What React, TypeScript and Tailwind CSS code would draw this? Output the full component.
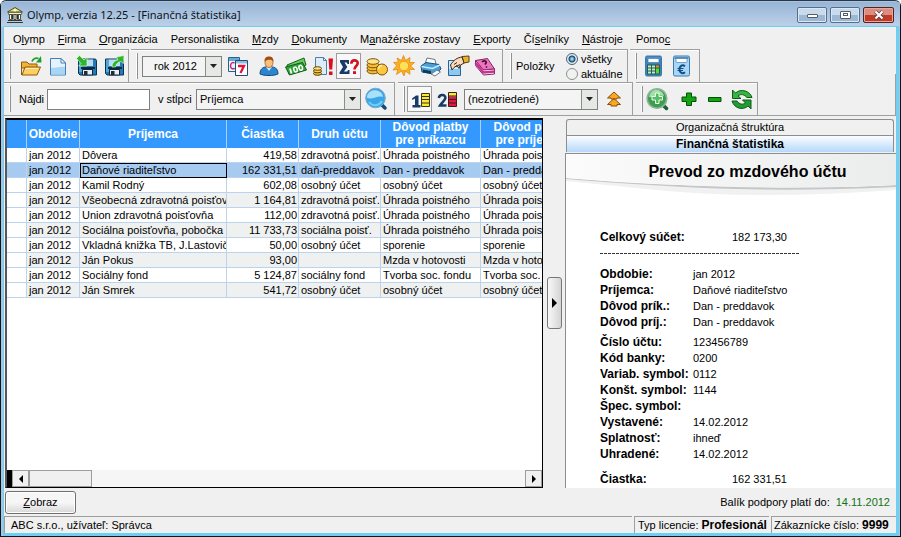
import type { ReactNode } from "react";
import clsx from "clsx";

type Payment = {
  period: string;
  payee: string;
  amount: string;
  account: string;
  reason: string;
};

const MENU = [
  ["O", "l", "ymp"],
  ["", "F", "irma"],
  ["", "O", "rganizácia"],
  ["Personalistika", "", ""],
  ["", "M", "zdy"],
  ["", "D", "okumenty"],
  ["M", "a", "nažérske zostavy"],
  ["", "E", "xporty"],
  ["Čí", "s", "elníky"],
  ["", "N", "ástroje"],
  ["Pomo", "c", ""],
];

const PAYMENTS: Payment[] = [
  { period: "jan 2012", payee: "Dôvera", amount: "419,58", account: "zdravotná poisť.", reason: "Úhrada poistného" },
  { period: "jan 2012", payee: "Daňové riaditeľstvo", amount: "162 331,51", account: "daň-preddavok", reason: "Dan - preddavok" },
  { period: "jan 2012", payee: "Kamil Rodný", amount: "602,08", account: "osobný účet", reason: "osobný účet" },
  { period: "jan 2012", payee: "Všeobecná zdravotná poisťov", amount: "1 164,81", account: "zdravotná poisť.", reason: "Úhrada poistného" },
  { period: "jan 2012", payee: "Union zdravotná poisťovňa", amount: "112,00", account: "zdravotná poisť.", reason: "Úhrada poistného" },
  { period: "jan 2012", payee: "Sociálna poisťovňa, pobočka", amount: "11 733,73", account: "sociálna poisť.", reason: "Úhrada poistného" },
  { period: "jan 2012", payee: "Vkladná knižka TB, J.Lastovič", amount: "50,00", account: "osobný účet", reason: "sporenie" },
  { period: "jan 2012", payee: "Ján Pokus", amount: "93,00", account: "", reason: "Mzda v hotovosti" },
  { period: "jan 2012", payee: "Sociálny fond", amount: "5 124,87", account: "sociálny fond", reason: "Tvorba soc. fondu" },
  { period: "jan 2012", payee: "Ján Smrek", amount: "541,72", account: "osobný účet", reason: "osobný účet" },
];

const DETAIL_GROUPS = [
  [
    ["Obdobie:", "jan 2012"],
    ["Príjemca:", "Daňové riaditeľstvo"],
    ["Dôvod prík.:", "Dan - preddavok"],
    ["Dôvod príj.:", "Dan - preddavok"],
  ],
  [
    ["Číslo účtu:", "123456789"],
    ["Kód banky:", "0200"],
    ["Variab. symbol:", "0112"],
    ["Konšt. symbol:", "1144"],
    ["Špec. symbol:", ""],
    ["Vystavené:", "14.02.2012"],
    ["Splatnosť:", "ihneď"],
    ["Uhradené:", "14.02.2012"],
  ],
];

function Icon({ children }: { children: ReactNode }) {
  return (
    <svg viewBox="0 0 24 24" className="h-6 w-6 shrink-0" aria-hidden="true">
      {children}
    </svg>
  );
}

function ToolButton({ label, active, children }: { label: string; active?: boolean; children: ReactNode }) {
  return (
    <button
      type="button"
      aria-label={label}
      className={clsx(
        "flex h-[26px] shrink-0 items-center justify-center border",
        active ? "mr-[2px] w-[25px] border-[#9c9c9c] bg-[#f8f8fa]" : "w-[27px] border-transparent",
      )}
    >
      <Icon>{children}</Icon>
    </button>
  );
}

function ToolGroup({ className, children }: { className?: string; children?: ReactNode }) {
  return (
    <div
      className={clsx(
        "flex items-center border-t border-r border-[#9d9f9d] pl-[5px] shadow-[inset_0_1px_0_#ffffff]",
        className,
      )}
    >
      <span className="h-[26px] w-[2px] shrink-0 border-r border-[#8f918f] bg-white" />
      {children}
    </div>
  );
}

function Combo({ label, value, className, center }: { label: string; value: string; className: string; center?: boolean }) {
  return (
    <div className={clsx("relative h-[21px] shrink-0 border border-[#7f817f] bg-[#f3f4f3]", className)}>
      <select
        aria-label={label}
        className={clsx("block h-full w-full appearance-none bg-transparent pr-4 pl-[3px] outline-none", center && "text-center")}
      >
        <option>{value}</option>
      </select>
      <span className="pointer-events-none absolute inset-y-0 right-0 flex w-4 items-center justify-center border-l border-[#8c8e8c] bg-[#e6e8e6]">
        <svg viewBox="0 0 7 4" className="h-1 w-[7px]">
          <path d="M0 0h7L3.500 4z" fill="#222" />
        </svg>
      </span>
    </div>
  );
}

function Disk({ out }: { out?: boolean }) {
  return (
    <>
      <path d="M3.500 5h17l1 1.500V21H5l-1.500-1.500z" fill="#2579b5" stroke="#0d3350" />
      <path d="M4 5.500h3V18H4z" fill="#4fa6dc" />
      <path d="M7 5.500h11v6.500H7z" fill="#b9dcf2" />
      <path d="M6 13h14v2H6z" fill="#10283b" />
      <path d="M7.500 15.500h10V21h-10z" fill="#e8eef2" stroke="#10283b" />
      <path d="M9 17h3.500v4H9z" fill="#1b2c3a" />
      {out ? (
        <path d="M10 13c0-4 2.500-6.500 6-7L14.500 3 22 1.500 21.500 9.500 19 7.500c-3 .5-5 2.500-5.500 5.500z" fill="#2fb52c" stroke="#e9ffe6" strokeWidth=".6" />
      ) : (
        <path d="M1.500 4.500 4.500 1.500l4.500 4.500L12 3v9H3.500L6 9.500z" fill="#2fb52c" stroke="#e9ffe6" strokeWidth=".6" />
      )}
    </>
  );
}

function Calculator({ euro }: { euro?: boolean }) {
  return (
    <>
      <rect x="3.500" y="2" width="16" height="20" rx="1.500" fill={euro ? "#a8d6f6" : "#3f83bb"} stroke="#3c79ab" />
      <path d="M4.500 3h14v2h-14z" fill="#4b8fc8" />
      <rect x="6" y="4.500" width="11" height="4" rx="1" fill="#fff" stroke="#356f9f" strokeWidth=".6" />
      {euro ? (
        <>
          <path d="M15 12.300c-3-2.300-5.500 0-5.500 3s2.500 5.300 5.500 3" fill="none" stroke="#114d87" strokeWidth="2" />
          <path d="M7.500 14.500h6M7.500 16.500h5.500" stroke="#114d87" />
        </>
      ) : (
        <>
          <path d="M5 10.500h13v10H5z" fill="#1f5d55" />
          <path d="M6 11.500h3v2H6zM10 11.500h3v2h-3zM6 14.500h3v2H6zM10 14.500h3v2h-3zM6 17.500h3v2H6zM10 17.500h3v2h-3z" fill="#c7ecb9" />
          <path d="M14 11.500h3v2h-3z" fill="#f08b3a" />
          <path d="M14 14.500h3v5h-3z" fill="#4ddb3a" />
        </>
      )}
    </>
  );
}

function TitleBar() {
  return (
    <header className="flex h-[25px] shrink-0 items-center bg-linear-to-b from-[#98b5d6] to-[#bdd2e9] pr-[6px] pl-[5px]">
      <svg viewBox="0 0 18 18" className="h-[18px] w-[18px] shrink-0" aria-hidden="true">
        <path d="M9 1.500 16.500 6h-15z" fill="#e8e57a" stroke="#4d4b24" />
        <circle cx="9" cy="4.300" r="1.300" fill="#fffbd0" />
        <path d="M2.500 6.500h13v2h-13z" fill="#f6f3bf" stroke="#3c3a25" strokeWidth=".6" />
        <path d="M3.500 8.500h2v5h-2zM8 8.500h2v5H8zM12.500 8.500h2v5h-2z" fill="#fffde0" stroke="#2e2d20" strokeWidth=".8" />
        <path d="M6.500 8.500v5M11.500 8.500v5" stroke="#2e2d20" />
        <path d="M2 14h14v1H2zM1 16h16v1H1z" fill="#3a382a" />
      </svg>
      <h1 className="ml-[3px] flex-1 truncate pt-px font-['Noto_Sans','Liberation_Sans',sans-serif] text-[11px] text-[#0c1420]">
        Olymp, verzia 12.25 - [Finančná štatistika]
      </h1>
      <div className="flex gap-[3px]">
        <button type="button" aria-label="Minimalizovať" className="flex h-4 w-[30px] items-center justify-center rounded-[2px] border border-[#55708f] bg-linear-to-b from-[#c9daec] from-50% to-[#9db8d5] to-50% shadow-[inset_0_0_0_1px_#dbe7f3]">
          <span className="mt-[3px] h-1 w-[11px] rounded-[1px] border border-[#535d68] bg-white" />
        </button>
        <button type="button" aria-label="Maximalizovať" className="flex h-4 w-[30px] items-center justify-center rounded-[2px] border border-[#55708f] bg-linear-to-b from-[#c9daec] from-50% to-[#9db8d5] to-50% shadow-[inset_0_0_0_1px_#dbe7f3]">
          <span className="flex h-2 w-[11px] items-center justify-center rounded-[1px] border border-[#535d68] bg-white">
            <span className="h-[3px] w-[5px] border border-[#535d68]" />
          </span>
        </button>
        <button type="button" aria-label="Zavrieť" className="flex h-4 w-[31px] items-center justify-center rounded-[2px] border border-[#5d1f1a] bg-linear-to-b from-[#dc8d80] from-50% to-[#c03a26] to-50% shadow-[inset_0_0_0_1px_#e6a79c]">
          <svg viewBox="0 0 12 10" className="h-[10px] w-3" aria-hidden="true">
            <path d="m2.500 1.500 7 7m0-7-7 7" stroke="#4b3f45" strokeWidth="3.600" />
            <path d="m2.500 1.500 7 7m0-7-7 7" stroke="#fff" strokeWidth="2.200" />
          </svg>
        </button>
      </div>
    </header>
  );
}

function MainToolbar() {
  return (
    <div className="flex h-[33px] shrink-0 gap-[2px]">
      <ToolGroup className="w-[125px]">
        <div className="ml-[6px] flex">
          <ToolButton label="Otvoriť">
            <path d="M2.500 8h5.500l2 2h8v4H2.500z" fill="#f2b23a" stroke="#8d5a0c" />
            <path d="M2.500 21V8" stroke="#8d5a0c" />
            <path d="M6 13h15.500L18 21H3z" fill="#fdcf62" stroke="#8d5a0c" />
            <path d="M7 14.500h12" stroke="#fff1b8" />
            <path d="M13 7.500c1-3 4-4 6.500-3" fill="none" stroke="#1f9c2b" strokeWidth="1.800" />
            <path d="m22 2 .5 6.500H17z" fill="#1f9c2b" />
          </ToolButton>
          <ToolButton label="Nový">
            <path d="M4.500 4.500H15l4.500 4.500v12h-15z" fill="#e3f2fc" stroke="#3f7fb8" />
            <path d="M5 14c5 0 9-2 14-1v7.500H5z" fill="#a9d5f5" />
            <path d="M15 4.500V9h4.500z" fill="#fff" stroke="#3f7fb8" />
          </ToolButton>
          <span className="w-[2px]" />
          <ToolButton label="Načítať"><Disk /></ToolButton>
          <ToolButton label="Uložiť"><Disk out /></ToolButton>
        </div>
      </ToolGroup>
      <ToolGroup className="w-[372px]">
        <Combo label="Rok" value="rok 2012" className="ml-1 w-20" center />
        <div className="ml-[2px] flex">
          <ToolButton label="Kalendár">
            <path d="M2.500 3.500h11v14h-11z" fill="#e9f3fc" stroke="#26618f" />
            <path d="M3 4h10v3H3z" fill="#6ba7d6" />
            <path d="M8.500 9c-2-1-4 0-4 3s3 3.500 4 2" fill="none" stroke="#c42c75" strokeWidth="1.500" />
            <path d="M9.500 6.500h12v15h-12z" fill="#fff" stroke="#1d4e79" />
            <path d="M10 7h11v2.500H10z" fill="#8dbce2" />
            <path d="M12 12h6l-3.500 7" fill="none" stroke="#e0143a" strokeWidth="2.300" />
          </ToolButton>
          <span className="w-1" />
          <ToolButton label="Zamestnanci">
            <path d="M3 20c0-5 3-7 6-7h6c4 0 6 3 6 7-4 2-14 2-18 0z" fill="#2c86cf" stroke="#164a7c" />
            <path d="M9 13h6l-3 4z" fill="#cfe9fb" />
            <ellipse cx="12" cy="8.500" rx="4" ry="5" fill="#f8c07b" stroke="#a55c18" strokeWidth=".8" />
            <path d="M7.500 7.500c0-4 2-5 4.500-5s4.500 1 4.500 5c-2-2.500-6-2.500-9 0z" fill="#a34b12" />
          </ToolButton>
          <ToolButton label="Mzdy">
            <path d="m3 11 17-7 2 7L5 20z" fill="#6cc95f" stroke="#18641a" />
            <path d="m1.500 13 17-4.500 4 7.500-17 5z" fill="#2fa336" stroke="#11581a" />
            <path d="m6 14.500 1.500 5" stroke="#fff" strokeWidth="1.800" />
            <ellipse cx="11.500" cy="15.500" rx="1.700" ry="2.500" transform="rotate(-17 11.500 15.500)" fill="none" stroke="#fff" strokeWidth="1.500" />
            <ellipse cx="16.700" cy="13.800" rx="1.700" ry="2.500" transform="rotate(-17 16.700 13.800)" fill="none" stroke="#fff" strokeWidth="1.500" />
          </ToolButton>
          <ToolButton label="Neuhradené doklady">
            <path d="M4.500 3.500h8l3 3v14h-11z" fill="#dcecf8" stroke="#4d7fa8" />
            <path d="M12.500 3.500v3h3z" fill="#fff" stroke="#4d7fa8" />
            <ellipse cx="6.500" cy="19.500" rx="4" ry="1.800" fill="#f2bb2c" stroke="#5f4206" />
            <ellipse cx="6.500" cy="17" rx="4" ry="1.800" fill="#f8ce4a" stroke="#5f4206" />
            <ellipse cx="6.500" cy="14.500" rx="4" ry="1.800" fill="#fde27c" stroke="#5f4206" />
            <path d="M17.500 4.500H22l-.8 11h-2.900zM18 17.500h3.500V21H18z" fill="#d90f1d" />
          </ToolButton>
          <ToolButton label="Finančná štatistika" active>
            <path d="M3 6h9v4h-1.500l-.7-1.500H7.500l2.800 4.500-3.300 4.500h3.200l.8-1.500h1.500v4H2.500v-1.500L6 13 3 8z" fill="#173a68" />
            <path d="M14.300 9.800c0-4.500 6.400-4.300 6.400-.8 0 3-3.200 3-3.200 6.500" fill="none" stroke="#d5101f" strokeWidth="2.600" />
            <path d="M16 17.200h3V20h-3z" fill="#d5101f" />
          </ToolButton>
          <ToolButton label="Zrážky">
            <g fill="#f5bd35" stroke="#7d5308">
              <ellipse cx="8" cy="17" rx="6" ry="2.800" />
              <ellipse cx="8" cy="14" rx="6" ry="2.800" />
              <ellipse cx="8" cy="11" rx="6" ry="2.800" />
              <ellipse cx="8" cy="7.500" rx="6" ry="2.800" fill="#fde588" />
              <circle cx="17" cy="15.500" r="5.500" fill="#fbc73c" />
            </g>
            <path d="M13.500 15c.3-2.500 1.500-3.500 3.500-3.500" fill="none" stroke="#fff0a8" strokeWidth="1.500" />
          </ToolButton>
          <ToolButton label="Dovolenky">
            <path d="m11.500 1.500 2 5L18 3.500l-.5 5 5 0-4 3.500 4 3.500-5-.2.500 5-4.500-3.300-1.500 5-2.500-5-5 3.500 1.500-5-5 .5 3.800-4.500-3.300-3 5-.3L5 4l4.500 2.500z" fill="#fbb126" stroke="#e38609" strokeWidth=".8" />
            <circle cx="12" cy="12" r="4.800" fill="#ffe05b" stroke="#f09a17" />
          </ToolButton>
          <ToolButton label="Tlač">
            <path d="m6 10 2-6 8 1.500 1 5z" fill="#fff" stroke="#66788a" />
            <path d="m2 12 5-3.500 13 2 2 4.500-6 5-13-2z" fill="#4a9fd6" stroke="#174f7c" />
            <path d="m2.500 12.500 11 2L21 11" fill="none" stroke="#c9eafd" strokeWidth="1.500" />
            <path d="m4 15.500 8 1.500v3l-8-1.500z" fill="#12395b" />
            <path d="m12 20 6-4 3.500 2-5.500 4z" fill="#f6fafc" stroke="#66788a" />
          </ToolButton>
          <ToolButton label="Podpis">
            <path d="M2.500 6.500h12v15h-12z" fill="#cfe9fb" stroke="#286595" />
            <path d="M3 15h11v6H3z" fill="#8cc9f2" />
            <path d="m16 2.500 7-.5v6l-5 1z" fill="#e7b22e" stroke="#5d420a" />
            <path d="M4.500 11c3-5 7-7.500 11.500-8l2 6-4 2.500-1 3-2-3-3 2-2 2.500z" fill="#fbd9bd" stroke="#3f2a1c" />
            <path d="m8 10.500 3-2m-1 4 4-2" stroke="#3f2a1c" />
          </ToolButton>
          <ToolButton label="Príručka">
            <path d="m2.500 6.500 12-2L21.500 15l-11 1z" fill="#ec76bd" stroke="#8e2167" />
            <path d="m2.500 6.500 8 9.500 11-1v5l-11 1-8-9.500z" fill="#fff" stroke="#8e2167" />
            <path d="m2.500 9 8 9.500 11-1" fill="none" stroke="#c43292" strokeWidth="2.500" />
            <path d="M9 8c2-2.500 5-.5 4 1l-1 1.500m1 2 1 1" fill="none" stroke="#401031" strokeWidth="1.700" />
          </ToolButton>
        </div>
      </ToolGroup>
      <ToolGroup className="w-[123px]">
        <fieldset className="ml-1 flex items-center gap-[10px] pt-px">
          <legend className="float-left w-[40px]">Položky</legend>
          <div className="flex flex-col gap-px">
            {["všetky", "aktuálne"].map((name, i) => (
              <label key={name} className="flex h-[14px] items-center gap-[3px]">
                <input
                  type="radio"
                  name="items"
                  defaultChecked={i === 0}
                  className="h-3 w-3 appearance-none rounded-full border border-[#8e8f8f] bg-[#f1f1f1] checked:border-[#46617c] checked:bg-[radial-gradient(circle,#8fd6f5_0_1px,#17405f_3px,#e8eef3_4px)]"
                />
                {name}
              </label>
            ))}
          </div>
        </fieldset>
      </ToolGroup>
      <ToolGroup className="w-[70px]">
        <div className="ml-[3px] flex gap-px">
          <ToolButton label="Kalkulačka"><Calculator /></ToolButton>
          <ToolButton label="Prevod na eurá"><Calculator euro /></ToolButton>
        </div>
      </ToolGroup>
    </div>
  );
}

function SearchToolbar() {
  return (
    <div className="flex h-[34px] shrink-0 gap-[3px] border-b border-[#9d9f9d]">
      <ToolGroup className="w-[391px]">
        <label htmlFor="find" className="ml-2 w-[28px]">Nájdi</label>
        <input id="find" className="h-[21px] w-[103px] shrink-0 border border-[#7f817f] bg-white px-1 outline-none" />
        <span className="ml-2 w-[38px] shrink-0">v stĺpci</span>
        <Combo label="v stĺpci" value="Príjemca" className="w-[165px]" />
        <div className="ml-px flex">
          <ToolButton label="Hľadať">
            <path d="m18 18 3 3" stroke="#154b79" strokeWidth="3.500" strokeLinecap="round" />
            <circle cx="11.500" cy="11" r="9.800" fill="#3ca5e8" stroke="#7fa9c8" />
            <path d="M3 11c0-10 15-10 16-1-5-2-10 3-16 1z" fill="#a9e1fc" />
            <path d="M5 15c4 5 10 4 13-1" fill="none" stroke="#6bd1f8" strokeWidth="2" />
          </ToolButton>
        </div>
      </ToolGroup>
      <ToolGroup className="w-[235px]">
        <div className="ml-[2px] flex">
          <ToolButton label="Triedenie 1" active>
            <path d="M4 11.500 8 8.500h2.500V18h2v2.500h-8V18H7v-6.500L4.500 13z" fill="#173a68" />
            <path d="M13.500 6.500h8v13h-8z" fill="#f8e63b" stroke="#3a3610" />
            <path d="M13.500 9.500h8M13.500 12.500h8M13.500 16h8" stroke="#3a3610" />
          </ToolButton>
          <ToolButton label="Triedenie 2">
            <path d="M2.800 11c.7-4.500 7-3.700 6.600 0-.3 2.500-3.300 4-5.400 7.500h6.500" fill="none" stroke="#173a68" strokeWidth="2.500" />
            <path d="M12.500 5.500h8v4h-8z" fill="#f8e63b" />
            <path d="M12.500 9.500h8v10h-8z" fill="#e0174a" />
            <path d="M12.500 5.500h8v14h-8zM12.500 9h8M12.500 12.500h8M12.500 16h8" fill="none" stroke="#3a2010" />
          </ToolButton>
        </div>
        <Combo label="Triedenie" value="(nezotriedené)" className="ml-[3px] w-[134px]" />
        <div className="ml-[2px] flex">
          <ToolButton label="Vzostupne">
            <path d="m12 5 6.500 6h-3.500v1H9v-1H5.500zM12 11.500l6.500 6h-3.500v1.500H9v-1.500H5.500z" fill="#f9a825" stroke="#8b4d06" />
          </ToolButton>
        </div>
      </ToolGroup>
      <ToolGroup className="w-[122px]">
        <div className="flex">
          <ToolButton label="Detail">
            <path d="m19 19 2.500 2.500" stroke="#1f5d33" strokeWidth="3.500" strokeLinecap="round" />
            <circle cx="12" cy="11.500" r="9.800" fill="#3d9d4f" stroke="#8fb39a" strokeWidth="1.600" />
            <path d="M4 10C6 0 17 1 19 9 13 7 9 11 4 10z" fill="#a3dfa8" />
            <path d="M10.500 6H14v3.500h3.500V13H14v3.500h-3.500V13H7V9.500h3.500z" fill="#57bd64" stroke="#f0fff0" />
          </ToolButton>
          <span className="w-[5px]" />
          <ToolButton label="Pridať">
            <path d="M9.500 6h5v4h4.500v4.500h-4.500v4h-5v-4H5V10h4.500z" fill="#12a512" stroke="#074f07" />
          </ToolButton>
          <ToolButton label="Odobrať">
            <path d="M4.500 10.500H17v4H4.500z" fill="#12a512" stroke="#074f07" />
          </ToolButton>
          <ToolButton label="Obnoviť">
            <path d="M1.500 3v8.500H10L7 9c3-2.500 6-1.500 9 1.500h5C19 4 10 1 4.500 6z" fill="#37b341" stroke="#0f5a19" />
            <path d="M20 22v-9h-8.500l3 3c-3 2-6 1.500-8.500-2H1c2 7 10.500 10 16 5z" fill="#219b32" stroke="#0f5a19" />
          </ToolButton>
        </div>
      </ToolGroup>
      <div className="-mt-2 flex-1 border-r border-[#9d9f9d]" />
    </div>
  );
}

function PaymentTable() {
  return (
    <section className="flex min-w-0 flex-1 flex-col border-2 border-r border-b border-black border-l-[#55575c] bg-white">
      <div className="min-h-0 flex-1 overflow-hidden">
        <table className="w-[576px] table-fixed border-separate border-spacing-0">
          <colgroup>
            <col className="w-[20px]" />
            <col className="w-[53px]" />
            <col className="w-[147px]" />
            <col className="w-[72px]" />
            <col className="w-[82px]" />
            <col className="w-[100px]" />
            <col className="w-[102px]" />
          </colgroup>
          <thead>
            <tr className="h-7 bg-[#3399ff] leading-[13px] text-white">
              {["", "Obdobie", "Príjemca", "Čiastka", "Druh účtu", "Dôvod platby pre príkazcu", "Dôvod platby pre príjemcu"].map((title) => (
                <th key={title} className={clsx("border-r border-[#a9d2fb] p-0 text-[12px] font-bold", title.length > 20 && "px-2")}>
                  {title}
                </th>
              ))}
            </tr>
          </thead>
          <tbody>
            {PAYMENTS.map((row, i) => {
              const selected = i === 1;
              return (
                <tr
                  key={row.payee}
                  className={clsx(
                    "h-[15px] leading-[14px] whitespace-nowrap [&>td]:overflow-hidden [&>td]:border-r [&>td]:border-b [&>td]:border-[#bcd3ee] [&>td]:p-0 [&>td]:pr-px [&>td]:pl-[2px]",
                    selected ? "bg-[#a6caf0]" : i % 2 ? "bg-[#eff1f0]" : "bg-white",
                  )}
                >
                  <td className={selected ? "" : "bg-white"} />
                  <td>{row.period}</td>
                  <td className={clsx(selected && "outline outline-1 -outline-offset-1 outline-black")}>{row.payee}</td>
                  <td className="text-right">{row.amount}</td>
                  <td>{row.account}</td>
                  <td>{row.reason}</td>
                  <td>{row.reason}</td>
                </tr>
              );
            })}
          </tbody>
        </table>
      </div>
      <div className="flex h-[17px] shrink-0 bg-[#f6f6f6]">
        <span className="w-[5px] bg-black" />
        <button type="button" aria-label="Posunúť doľava" className="flex w-[17px] items-center justify-center border border-[#9c9e9c] bg-[#eff0ef]">
          <svg viewBox="0 0 4 8" className="h-2 w-1"><path d="M4 0v8L0 4z" /></svg>
        </button>
        <span className="w-[63px] border border-[#9c9e9c] bg-[#eff0ef]" />
        <span className="flex-1" />
        <button type="button" aria-label="Posunúť doprava" className="flex w-[17px] items-center justify-center border border-[#9c9e9c] bg-[#eff0ef]">
          <svg viewBox="0 0 4 8" className="h-2 w-1"><path d="M0 0v8l4-4z" /></svg>
        </button>
      </div>
    </section>
  );
}

function DetailPanel() {
  return (
    <aside className="flex w-[331px] shrink-0 flex-col">
      <div role="tablist" className="mr-[2px] ml-px flex flex-col pt-px">
        <button type="button" role="tab" aria-selected="false" className="h-[16px] rounded-t-[3px] border border-b-0 border-[#8b8d8f] bg-[#eff0ef] leading-[15px]">
          Organizačná štruktúra
        </button>
        <button type="button" role="tab" aria-selected="true" className="h-[17px] border border-b-0 border-[#8b8d8f] bg-linear-to-b from-[#fbfdff] to-[#b7d8fa] text-[12px] leading-[16px] font-bold">
          Finančná štatistika
        </button>
      </div>
      <div className="mt-px flex flex-1 flex-col border-t border-l border-[#8b8d8f] bg-white">
        <div className="relative h-[44px]">
          <svg viewBox="0 0 330 44" preserveAspectRatio="none" className="absolute inset-0 h-full w-full" aria-hidden="true">
            <defs>
              <linearGradient id="fold" x1="0" y1="0" x2="1" y2="0">
                <stop offset="0" stopColor="#fbfbfb" />
                <stop offset="1" stopColor="#ebecec" />
              </linearGradient>
            </defs>
            <path d="M0 24Q90 32 190 33T330 31V36Q190 46 90 36T0 27z" fill="#f1f1f1" />
            <path d="M0 24Q90 32 190 33T330 31V33Q240 37 170 35T0 25z" fill="#c4c6c7" />
            <path d="M0 0H330V31Q250 35 170 33T0 24z" fill="url(#fold)" />
          </svg>
          <h2 className="relative pt-2 pl-[33px] text-center text-[16px] leading-[20px] font-bold">Prevod zo mzdového účtu</h2>
        </div>
        <dl className="mt-[31px] ml-[34px] w-[187px] leading-4">
          <div className="flex justify-between">
            <dt className="text-[12px] font-bold">Celkový súčet:</dt>
            <dd>182 173,30</dd>
          </div>
          <div aria-hidden="true" className="my-2 h-px w-[200px] bg-[repeating-linear-gradient(90deg,#333_0_3px,transparent_3px_4px)]" />
          <div className="mt-3 flex flex-col gap-1">
            {DETAIL_GROUPS.map((group) => (
              <div key={group[0][0]}>
                {group.map(([name, value]) => (
                  <div key={name} className="flex h-4 whitespace-nowrap">
                    <dt className="w-[93px] shrink-0 text-[12px] font-bold">{name}</dt>
                    <dd>{value}</dd>
                  </div>
                ))}
              </div>
            ))}
          </div>
          <div className="mt-[9px] flex justify-between">
            <dt className="text-[12px] font-bold">Čiastka:</dt>
            <dd>162 331,51</dd>
          </div>
        </dl>
      </div>
    </aside>
  );
}

export default function App() {
  return (
    <div className="flex min-h-screen flex-col rounded-t-[6px] border border-[#10161c] border-t-[#2a3644] bg-[#a9c4e0] pt-px font-['Liberation_Sans',Arial,sans-serif] text-[11px] text-black">
      <TitleBar />
      <div className="mr-1 mb-[3px] ml-[3px] flex flex-1 flex-col bg-[#eff0ef] shadow-[1px_1px_0_2px_#6cd0f2]">
        <nav className="flex h-[22px] shrink-0 items-center gap-[13px] pt-[2px] pl-[9px] whitespace-nowrap">
          {MENU.map(([before, key, after]) => (
            <button key={before + key + after} type="button">
              {before}
              <span className="underline">{key}</span>
              {after}
            </button>
          ))}
        </nav>
        <MainToolbar />
        <SearchToolbar />
        <main className="mt-[2px] flex flex-1 pl-px">
          <PaymentTable />
          <div className="flex w-[22px] shrink-0 items-center justify-center">
            <button type="button" aria-label="Skryť panel" className="flex h-[52px] w-[15px] items-center justify-center rounded-[3px] border border-[#777977] bg-linear-to-r from-[#f8f8f8] to-[#d3d5d3]">
              <svg viewBox="0 0 5 10" className="h-[10px] w-[5px]"><path d="M0 0v10l5-5z" /></svg>
            </button>
          </div>
          <DetailPanel />
        </main>
        <div className="flex h-[28px] shrink-0 items-center justify-between pr-[6px] pl-px">
          <button type="button" className="h-[23px] w-[71px] rounded-[3px] border border-[#6f716f] bg-linear-to-b from-[#f6f6f6] from-50% to-[#d6d8d6] shadow-[inset_0_0_0_1px_#ffffff]">
            <span className="underline">Z</span>obraz
          </button>
          <p>
            Balík podpory platí do: <span className="ml-[3px] text-[#137313]">14.11.2012</span>
          </p>
        </div>
        <footer className="flex h-[17px] shrink-0 gap-[2px] leading-[16px] [&>p]:border-t [&>p]:border-l [&>p]:border-[#9d9f9d]">
          <p className="flex-1 pl-[6px]">ABC s.r.o., užívateľ: Správca</p>
          <p className="w-[135px] pl-[3px] whitespace-nowrap">
            Typ licencie: <b className="text-[12px]">Profesionál</b>
          </p>
          <p className="w-[125px] pl-[2px] whitespace-nowrap">
            Zákaznícke číslo: <b className="text-[12px]">9999</b>
          </p>
        </footer>
      </div>
    </div>
  );
}
